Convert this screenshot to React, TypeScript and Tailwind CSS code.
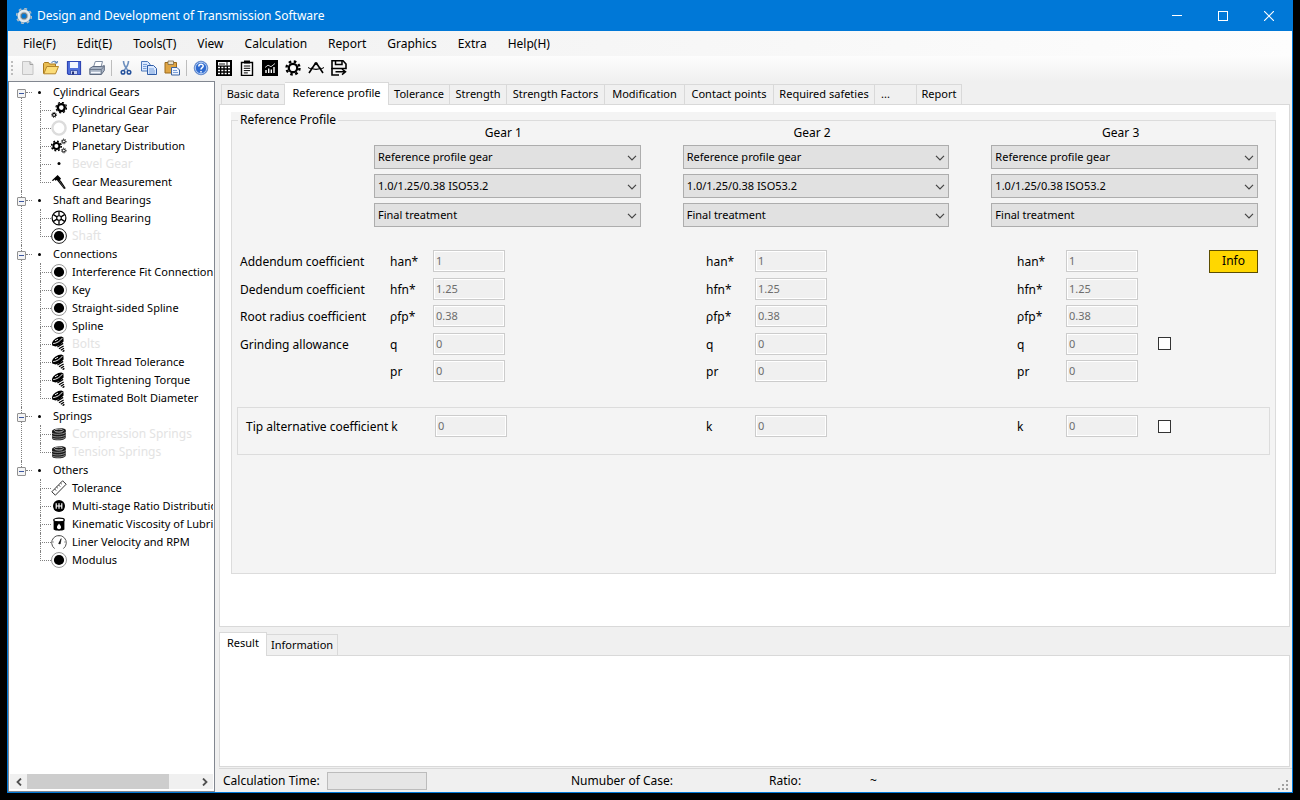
import React, { useState } from 'react';

type IconProps = { className?: string };

const Svg = ({ children, className = 'size-4' }: { children: React.ReactNode; className?: string }) => (
    <svg viewBox="0 0 16 16" className={`${className} shrink-0`} fill="none" aria-hidden="true">
        {children}
    </svg>
);

// teeth are drawn as a dashed ring around the body
const Cog = ({ cx, cy, r, w, tooth, color = '#000' }: { cx: number; cy: number; r: number; w: number; tooth: number; color?: string }) => {
    const outer = r + w / 2 + tooth / 2;
    const step = (2 * Math.PI * outer) / 16;
    return (
        <g stroke={color}>
            <circle cx={cx} cy={cy} r={r} strokeWidth={w} />
            <circle cx={cx} cy={cy} r={outer} strokeWidth={tooth} strokeDasharray={`${step} ${step}`} />
        </g>
    );
};

const AppIcon = () => (
    <Svg>
        <Cog cx={8} cy={8} r={4.6} w={4} tooth={1.6} color="#aebbc4" />
        <circle cx="8" cy="8" r="5.2" stroke="#e4ebef" strokeWidth="2" />
        <circle cx="8" cy="8" r="2.8" stroke="#5f7480" strokeWidth="1" />
    </Svg>
);

const GearPairIcon = () => (
    <Svg>
        <Cog cx={10.3} cy={5.6} r={3.5} w={2.4} tooth={1.2} />
        <Cog cx={3.1} cy={12.9} r={1.5} w={1.1} tooth={0.9} />
    </Svg>
);

const RingIcon = () => (
    <Svg>
        <circle cx="8" cy="8" r="6.6" stroke="#dcdcdc" strokeWidth="2.4" />
    </Svg>
);

const GearDistributionIcon = () => (
    <Svg>
        <Cog cx={5.4} cy={8} r={3} w={2} tooth={1.6} />
        <Cog cx={12.8} cy={3.4} r={1.5} w={1} tooth={0.8} />
        <Cog cx={12.8} cy={12.5} r={1.5} w={1} tooth={0.8} />
    </Svg>
);

const DotIcon = () => (
    <Svg>
        <circle cx="8" cy="7.5" r="1.5" fill="#000" />
    </Svg>
);

const CaliperIcon = () => (
    <Svg>
        <path d="M.8 6.4 6.6 1l3.4 3.4-1 1.6 1.4 1.4 4.4 6.8-1.800.8-5.600-7-1.600-2-1.400.8-1-1.200-1.200 1.400Z" fill="#000" />
        <path d="m8 6.600 5 7" stroke="#fff" strokeWidth="0.300" />
    </Svg>
);

const BearingIcon = () => (
    <Svg>
        <circle cx="8" cy="8" r="6.9" stroke="#000" strokeWidth="1.2" />
        <circle cx="8" cy="8" r="2.3" stroke="#000" strokeWidth="1.1" />
        <path d="M8 5.700V1.500M8 10.300v4.200M10 6.900l3.600-2.300M10 9.100l3.600 2.300M6 6.900 2.400 4.600M6 9.100l-3.600 2.300" stroke="#000" strokeWidth="1.300" />
    </Svg>
);

const ShaftIcon = () => (
    <Svg>
        <circle cx="8" cy="8" r="7.4" stroke="#222" strokeWidth="1" />
        <circle cx="8" cy="8" r="5.1" fill="#000" />
    </Svg>
);

const DiscIcon = () => (
    <Svg>
        <circle cx="8" cy="8" r="7.5" stroke="#8c8c8c" strokeWidth="0.9" />
        <circle cx="8" cy="8" r="5.1" fill="#000" />
    </Svg>
);

const BoltIcon = () => (
    <Svg>
        <path d="M1 7C2 3.600 6.400.8 10.400.6l2 1 .2 4L9 9l-4.400 1.600L1.200 9.400Z" fill="#000" />
        <path d="M2.200 7.600C5.600 7.400 9.400 5 11.400 2" stroke="#fff" strokeWidth="0.900" />
        <path d="m4 4.800 3-1.600" stroke="#fff" strokeWidth="0.900" />
        <path d="m6.400 11 5.800-3.600M8 12.800l4.600-2.800M9.800 14.200l3.200-2M11.600 15.600l1.800-1.200" stroke="#000" strokeWidth="1.300" />
    </Svg>
);

const SpringIcon = () => (
    <Svg>
        <path d="M1 5.200C1 1.800 14.800 1 14.800 4.200v7.600c-1 3-12.400 3.600-13.800.6Z" fill="#1a1a1a" />
        <ellipse cx="7.800" cy="4.600" rx="4.400" ry="1.500" stroke="#c8c8c8" strokeWidth="0.900" />
        <path d="M1 7.200c3 1.800 10.400 1.400 13.800-.8M1 9.800c3 1.800 10.400 1.400 13.800-.8M1.200 12c3 1.800 10.200 1.400 13.400-.8" stroke="#bdbdbd" strokeWidth="0.700" />
    </Svg>
);

const RulerIcon = () => (
    <Svg>
        <path d="M.8 11.800 11.600.8l3.600 3.400L4.400 15.200Z" fill="#fff" stroke="#333" strokeWidth="1" />
        <path d="m3.600 9 1.600 1.600M5.600 7l1.200 1.200M7.600 5l1.600 1.600M9.600 3l1.200 1.200" stroke="#333" strokeWidth="0.900" />
    </Svg>
);

const GearboxIcon = () => (
    <Svg>
        <circle cx="8" cy="8" r="6" fill="#000" />
        <path d="M5.200 5.200v5.600M8 5.200v5.600M10.800 5.200v5.600M5.200 8h5.600" stroke="#fff" strokeWidth="1.200" />
    </Svg>
);

const OilIcon = () => (
    <Svg>
        <path d="M2.600 4.400h10.800v9.200c-2 1.600-8.800 1.600-10.800 0Z" fill="#000" />
        <ellipse cx="8" cy="4" rx="5.300" ry="1.800" fill="#fff" stroke="#000" strokeWidth="1.200" />
        <path d="M8 7.600c1.600 2.200 2 2.800 2 3.600a2 2 0 0 1-4 0c0-.8.400-1.400 2-3.600Z" fill="#fff" />
    </Svg>
);

const GaugeIcon = () => (
    <Svg>
        <path d="M3.600 14.600a7.300 7.300 0 1 1 8.800 0" stroke="#555" strokeWidth="1" />
        <path d="m7.600 9.600 2.600-5-1 5.400Z" fill="#000" stroke="#000" strokeWidth="0.500" />
        <path d="M8 1.400v1.400M1.600 8H3M13 8h1.400" stroke="#777" strokeWidth="0.700" />
    </Svg>
);

const NewIcon = () => (
    <Svg>
        <path d="M2.500 1.500h7.500l3 3v10H2.500Z" fill="#e9e9e9" stroke="#c4c4c4" />
        <path d="M10 1.500v3h3" stroke="#a2a2a2" />
    </Svg>
);

const OpenIcon = () => (
    <Svg>
        <path d="M.5 13.500v-10l1-1h4l1 1.500h6v3" fill="#e9bd52" stroke="#a8791f" />
        <path d="m.8 13.800 3-7.300h11.700l-3 7.300Z" fill="#fbdc78" stroke="#b5862a" />
        <path d="M8.500 2.600C10.500.6 13 .8 14 3.200m0 0-2.400-.4m2.400.4.600-2" stroke="#5a82b4" strokeWidth="1.100" />
    </Svg>
);

const SaveIcon = () => (
    <Svg>
        <path d="M1.500 1.500h13v13h-12l-1-1Z" fill="#5070dc" stroke="#3046b4" strokeWidth="1.200" />
        <path d="M4 2h8v6H4Z" fill="#f3f6ff" />
        <path d="M4.500 10.500h7v4h-7Z" fill="#c9d2f0" stroke="#2f46a4" strokeWidth="0.800" />
        <path d="M6 11.500h2v3H6Z" fill="#24357e" />
    </Svg>
);

const PrintIcon = () => (
    <Svg>
        <path d="m4.500 7 1.800-5.500h7.200L12 7Z" fill="#fff" stroke="#7e8ba0" />
        <path d="m.8 8.500 3-2h9l2.500-1v5l-3 4H.8Z" fill="#a9b4c4" stroke="#5f6b80" />
        <path d="M2 12.500h9.500" stroke="#f5f8ff" strokeWidth="1.400" />
        <path d="M.8 9.500h11.500l3-3.500M12.300 9.500v5" stroke="#5f6b80" strokeWidth="0.800" />
    </Svg>
);

const CutIcon = () => (
    <Svg>
        <path d="M5.500 1c0 3 1.500 6 4.500 9.500M10.500 1c0 3-1.500 6-4.500 9.500" stroke="#6d8fbe" strokeWidth="1.600" />
        <circle cx="5" cy="12.300" r="1.800" stroke="#24519c" strokeWidth="1.500" />
        <circle cx="11" cy="12.300" r="1.800" stroke="#24519c" strokeWidth="1.500" />
    </Svg>
);

const CopyIcon = () => (
    <Svg>
        <path d="M.5 1.500h6l2.500 2.500v7H.5Z" fill="#dbe9ff" stroke="#4d78ba" />
        <path d="M6.500 5.500h6l3 3v6h-9Z" fill="#dbe9ff" stroke="#2f5da8" />
        <path d="M2 4.500h4M2 6.500h3.500M2 8.500h3.500M8 9h5M8 11h6M8 13h6" stroke="#6d97d6" strokeWidth="0.900" />
    </Svg>
);

const PasteIcon = () => (
    <Svg>
        <path d="M1 2.500h11.500V13H1Z" fill="#dfa544" stroke="#9c6a1c" />
        <path d="M4 1h5.500v3.500H4Z" fill="#e9e2cf" stroke="#7c6a48" strokeWidth="0.800" />
        <path d="M7.500 7.500h5.500l2.500 2.500v5h-8Z" fill="#eef4ff" stroke="#3b639f" />
        <path d="M9 10.500h4M9 12.500h5" stroke="#6d97d6" strokeWidth="0.900" />
    </Svg>
);

const HelpIcon = () => (
    <Svg>
        <circle cx="8" cy="8" r="6.800" fill="#2f6bd0" stroke="#6c8fcb" />
        <circle cx="8" cy="8" r="5.700" stroke="#d4e4fb" strokeWidth="0.800" />
        <path d="M5.800 6.400C5.800 3.400 10.400 3.600 10.200 6.200 10 7.600 8 7.800 8 9.600M8 11v1.500" stroke="#fff" strokeWidth="1.500" />
    </Svg>
);

const CalculatorIcon = () => (
    <Svg>
        <path d="M0 0h16v16H0Z" fill="#000" />
        <path d="M2 2h12v3.500H2Z" fill="#fff" />
        <path d="M3 4h6M11 2v3.500" stroke="#000" strokeWidth="0.900" />
        <path d="M2 7.500h12M2 10.500h12M2 13.500h12" stroke="#fff" strokeWidth="1.600" strokeDasharray="2 1.333" />
    </Svg>
);

const ClipboardIcon = () => (
    <Svg>
        <path d="M2.500 2.500h11v13h-11Z" fill="#fff" stroke="#000" strokeWidth="1.400" />
        <path d="M5 .5h6v3H5Z" fill="#000" />
        <path d="M4.800 6h6.400M4.800 8.300h6.400M4.800 10.600h6.400M4.800 12.900h4" stroke="#000" strokeWidth="1" />
    </Svg>
);

const ChartIcon = () => (
    <Svg>
        <path d="M0 0h16v16H0Z" fill="#000" />
        <path d="M4 13v-3M6.700 13V8.500M9.300 13V9.500M12 13V7" stroke="#fff" strokeWidth="1.400" />
        <path d="m3 7.500 3-2.300 3 1.500L13 3.500" stroke="#fff" strokeWidth="0.800" />
    </Svg>
);

const SettingsIcon = () => (
    <Svg>
        <Cog cx={8} cy={8} r={4.2} w={2.2} tooth={2.4} />
        <circle cx="8" cy="8" r="1.400" fill="#fff" />
    </Svg>
);

const CompassIcon = () => (
    <Svg>
        <path d="M7 4 1 13M9 4l6 9" stroke="#000" strokeWidth="1.600" />
        <path d="M3 8c3 1.600 7 1.600 10 0" stroke="#000" strokeWidth="1.200" />
        <circle cx="8" cy="3.600" r="1.700" fill="#000" />
        <path d="M0 7.500 3 9M13 9l3-1.500" stroke="#000" />
    </Svg>
);

const SaveAsIcon = () => (
    <Svg>
        <path d="M1 .8h11L15 4v4.500H1Z" stroke="#000" strokeWidth="1.600" />
        <path d="M4.500 1v3.500H11V1" stroke="#000" strokeWidth="1.500" />
        <path d="M1 8v7h7" stroke="#000" strokeWidth="1.600" />
        <path d="M4.500 11.800h9M11 9l3.500 2.800L11 14.600" stroke="#000" strokeWidth="1.500" />
    </Svg>
);

interface TreeItem {
    label: string;
    icon: React.ComponentType<IconProps>;
    disabled?: boolean;
}

const tree: { label: string; items: TreeItem[] }[] = [
    {
        label: 'Cylindrical Gears',
        items: [
            { label: 'Cylindrical Gear Pair', icon: GearPairIcon },
            { label: 'Planetary Gear', icon: RingIcon },
            { label: 'Planetary Distribution', icon: GearDistributionIcon },
            { label: 'Bevel Gear', icon: DotIcon, disabled: true },
            { label: 'Gear Measurement', icon: CaliperIcon },
        ],
    },
    {
        label: 'Shaft and Bearings',
        items: [
            { label: 'Rolling Bearing', icon: BearingIcon },
            { label: 'Shaft', icon: ShaftIcon, disabled: true },
        ],
    },
    {
        label: 'Connections',
        items: [
            { label: 'Interference Fit Connection', icon: DiscIcon },
            { label: 'Key', icon: DiscIcon },
            { label: 'Straight-sided Spline', icon: DiscIcon },
            { label: 'Spline', icon: DiscIcon },
            { label: 'Bolts', icon: BoltIcon, disabled: true },
            { label: 'Bolt Thread Tolerance', icon: BoltIcon },
            { label: 'Bolt Tightening Torque', icon: BoltIcon },
            { label: 'Estimated Bolt Diameter', icon: BoltIcon },
        ],
    },
    {
        label: 'Springs',
        items: [
            { label: 'Compression Springs', icon: SpringIcon, disabled: true },
            { label: 'Tension Springs', icon: SpringIcon, disabled: true },
        ],
    },
    {
        label: 'Others',
        items: [
            { label: 'Tolerance', icon: RulerIcon },
            { label: 'Multi-stage Ratio Distribution', icon: GearboxIcon },
            { label: 'Kinematic Viscosity of Lubricant', icon: OilIcon },
            { label: 'Liner Velocity and RPM', icon: GaugeIcon },
            { label: 'Modulus', icon: DiscIcon },
        ],
    },
];

const menus = ['File(F)', 'Edit(E)', 'Tools(T)', 'View', 'Calculation', 'Report', 'Graphics', 'Extra', 'Help(H)'];

const toolGroups = [
    [
        { name: 'New', icon: NewIcon },
        { name: 'Open', icon: OpenIcon },
        { name: 'Save', icon: SaveIcon },
        { name: 'Print', icon: PrintIcon },
    ],
    [
        { name: 'Cut', icon: CutIcon },
        { name: 'Copy', icon: CopyIcon },
        { name: 'Paste', icon: PasteIcon },
    ],
    [
        { name: 'Help', icon: HelpIcon },
        { name: 'Calculate', icon: CalculatorIcon },
        { name: 'Report', icon: ClipboardIcon },
        { name: 'Chart', icon: ChartIcon },
        { name: 'Settings', icon: SettingsIcon },
        { name: 'Drawing', icon: CompassIcon },
        { name: 'Save as', icon: SaveAsIcon },
    ],
];

const tabs = [
    { label: 'Basic data', width: 'w-16' },
    { label: 'Reference profile', width: 'w-[104px]' },
    { label: 'Tolerance', width: 'w-[61px]' },
    { label: 'Strength', width: 'w-[57px]' },
    { label: 'Strength Factors', width: 'w-[98px]' },
    { label: 'Modification', width: 'w-[80px]' },
    { label: 'Contact points', width: 'w-[89px]' },
    { label: 'Required safeties', width: 'w-[101px]' },
    { label: '...', width: 'w-[42px] px-[6px] text-left' },
    { label: 'Report', width: 'w-[45px]' },
];

const coefficients = [
    { label: 'Addendum coefficient', symbol: 'han*', value: '1' },
    { label: 'Dedendum coefficient', symbol: 'hfn*', value: '1.25' },
    { label: 'Root radius coefficient', symbol: 'ρfp*', value: '0.38' },
    { label: 'Grinding allowance', symbol: 'q', value: '0' },
    { label: '', symbol: 'pr', value: '0' },
];

const gears = ['Gear 1', 'Gear 2', 'Gear 3'];
const profileOptions = ['Reference profile gear', '1.0/1.25/0.38 ISO53.2', 'Final treatment'];

const TreeView = () => (
    <nav className="flex w-[207px] shrink-0 flex-col border border-[#828790] bg-white text-[11px]">
        <ul className="mr-px flex-1 overflow-hidden whitespace-nowrap pt-px pl-2">
            {tree.map((group, g) => (
                <li key={group.label} className="flex">
                    <div className="flex w-[9px] shrink-0 flex-col">
                        <div className={`ml-1 h-[6px] ${g > 0 ? 'border-l border-dotted border-[#808080]' : ''}`} />
                        <button aria-label={`Collapse ${group.label}`} className="flex size-[9px] items-center justify-center rounded-[1px] border border-[#919191] bg-[#f4f4f4]">
                            <span className="h-px w-[5px] bg-[#3c57a0]" />
                        </button>
                        {g < tree.length - 1 && <div className="ml-1 flex-1 border-l border-dotted border-[#808080]" />}
                    </div>
                    <div>
                        <div className="flex h-[18px] items-center">
                            <span className="w-[6px] border-t border-dotted border-[#808080]" />
                            <span className="ml-[6px] size-[3px] rounded-full bg-black" />
                            <span className="ml-3">{group.label}</span>
                        </div>
                        <ul className="pl-[14px]">
                            {group.items.map((item, i) => (
                                <li key={item.label} className="flex h-[18px] items-center">
                                    <div className="flex w-[11px] shrink-0 flex-col self-stretch">
                                        <div className="h-[10px] border-b border-l border-dotted border-[#808080]" />
                                        {i < group.items.length - 1 && <div className="flex-1 border-l border-dotted border-[#808080]" />}
                                    </div>
                                    <item.icon />
                                    <span className={`ml-[5px] ${item.disabled ? 'text-[12px] text-[#e3e3e3]' : ''}`}>{item.label}</span>
                                </li>
                            ))}
                        </ul>
                    </div>
                </li>
            ))}
        </ul>
        <div className="mx-px mb-[2px] flex h-[15px] items-center bg-[#f0f0f0]">
            <button aria-label="Scroll left" className="flex h-full w-[17px] items-center justify-center">
                <svg viewBox="0 0 6 8" className="h-2 w-[6px]" fill="none"><path d="M5 .5 1.500 4 5 7.500" stroke="#505050" strokeWidth="1.800" /></svg>
            </button>
            <div className="h-full w-[142px] bg-[#cdcdcd]" />
            <button aria-label="Scroll right" className="ml-auto flex h-full w-[17px] items-center justify-center">
                <svg viewBox="0 0 6 8" className="h-2 w-[6px]" fill="none"><path d="M1 .5 4.500 4 1 7.500" stroke="#505050" strokeWidth="1.800" /></svg>
            </button>
        </div>
    </nav>
);

const ValueInput = ({ id, value }: { id: string; value: string }) => (
    <input
        id={id}
        disabled
        defaultValue={value}
        className="h-[22px] w-[72px] border border-[#cccccc] bg-[#f0f0f0] px-[2px] pb-px text-[11px] text-[#6d6d6d] shadow-[inset_0_0_0_1px_#fff]"
    />
);

const CheckBox = ({ label }: { label: string }) => (
    <input type="checkbox" aria-label={label} className="ml-auto size-[13px] appearance-none border border-[#333333] bg-white checked:bg-[#333333]" />
);

const ProfileSelect = ({ gear, option }: { gear: string; option: string }) => (
    <div className="relative">
        <select aria-label={`${gear} ${option}`} className="block h-6 w-full appearance-none border border-[#adadad] bg-[#e1e1e1] px-[3px] text-[11px]">
            <option>{option}</option>
        </select>
        <svg viewBox="0 0 10 6" className="pointer-events-none absolute top-[10px] right-1 h-[6px] w-[10px]" fill="none">
            <path d="M1 .8 5 4.800 9 .8" stroke="#444" strokeWidth="1.200" />
        </svg>
    </div>
);

const ReferenceProfile = () => (
    <div className="flex flex-1 bg-[#f4f4f4]">
        <fieldset className="min-w-0 flex-1 border border-[#dcdcdc]">
            <legend className="ml-[6px] px-[2px] leading-4">Reference Profile</legend>
            <div className="flex gap-[42px] pr-[17px] pl-[142px]">
                {gears.map((gear) => (
                    <div key={gear} className="flex flex-1 flex-col gap-[5px]">
                        <h2 className="-mt-1 h-4 pr-2 text-center leading-[18px]">{gear}</h2>
                        {profileOptions.map((option) => (
                            <ProfileSelect key={option} gear={gear} option={option} />
                        ))}
                    </div>
                ))}
            </div>
            <div className="mt-[23px] flex pr-[17px] pl-2">
                <div className="grid h-[132px] flex-1 grid-cols-[150px_43px_273fr_49px_262fr_49px_72px_33px_87px] content-between items-center">
                    {coefficients.map((row, r) => (
                        <React.Fragment key={row.symbol}>
                            <span className="pt-[2px] leading-5">{row.label}</span>
                            {gears.map((gear, g) => (
                                <React.Fragment key={gear}>
                                    <label htmlFor={`c${r}-${g}`} className="pt-[2px] leading-5">{row.symbol}</label>
                                    <ValueInput id={`c${r}-${g}`} value={row.value} />
                                </React.Fragment>
                            ))}
                            {row.symbol === 'q' ? <CheckBox label="Edit grinding allowance" /> : <span />}
                            {r === 0 ? (
                                <button className="-my-1 ml-auto h-[23px] w-[49px] border border-[#5c4d00] bg-[#ffd700] leading-4">Info</button>
                            ) : (
                                <span />
                            )}
                        </React.Fragment>
                    ))}
                </div>
            </div>
            <div className="mx-[5px] mt-[25px] grid h-12 grid-cols-[189px_271fr_49px_262fr_49px_72px_33px_87px] items-center border border-[#dcdcdc] pr-[11px] pb-[10px] pl-2">
                <label htmlFor="k-0" className="pt-[2px] leading-5">Tip alternative coefficient k</label>
                <ValueInput id="k-0" value="0" />
                <label htmlFor="k-1" className="pt-[2px] leading-5">k</label>
                <ValueInput id="k-1" value="0" />
                <label htmlFor="k-2" className="pt-[2px] leading-5">k</label>
                <ValueInput id="k-2" value="0" />
                <CheckBox label="Edit tip alternative coefficient" />
            </div>
        </fieldset>
    </div>
);

const App = () => {
    const [activeTab, setActiveTab] = useState<string>('Reference profile');
    const [activeResult, setActiveResult] = useState<string>('Result');

    return (
        <div className="flex h-screen bg-black px-[7px] pb-[7px] font-['Noto_Sans','Open_Sans',sans-serif] text-[12px] text-black">
            <div className="flex min-w-0 flex-1 flex-col border border-t-0 border-[#0078d7] bg-[#f0f0f0]">
                <header className="flex h-[31px] shrink-0 items-center bg-[#0078d7] pl-2 text-white">
                    <AppIcon />
                    <h1 className="ml-[5px] flex-1">Design and Development of Transmission Software</h1>
                    <button aria-label="Minimize" className="flex h-full w-[46px] items-center justify-center">
                        <span className="h-px w-[10px] bg-white" />
                    </button>
                    <button aria-label="Maximize" className="flex h-full w-[46px] items-center justify-center">
                        <span className="size-[10px] border border-white" />
                    </button>
                    <button aria-label="Close" className="flex h-full w-[46px] items-center justify-center">
                        <svg viewBox="0 0 10 10" className="size-[10px]"><path d="m0 0 10 10M10 0 0 10" stroke="#fff" strokeWidth="1.100" /></svg>
                    </button>
                </header>

                <nav className="flex h-[25px] shrink-0 items-center gap-[21px] bg-linear-to-r from-[#f0f0f0] to-[#fdfdfd] pl-[15px]">
                    {menus.map((menu) => (
                        <button key={menu}>{menu}</button>
                    ))}
                </nav>

                <div className="flex h-[25px] shrink-0 items-center bg-linear-to-b from-[#fdfdfd] to-[#f0f0f0] pb-px pl-[3px]">
                    <span className="mr-[7px] h-[14px] border-l-2 border-dotted border-[#bdbdbd]" />
                    {toolGroups.map((tools, i) => (
                        <div key={i} className="flex items-center">
                            {i > 0 && <span className="mx-[6px] h-4 w-px bg-[#bdbdbd]" />}
                            <div className="flex gap-[7px]">
                                {tools.map((tool) => (
                                    <button key={tool.name} aria-label={tool.name}>
                                        <tool.icon />
                                    </button>
                                ))}
                            </div>
                        </div>
                    ))}
                </div>

                <div className="flex min-h-0 flex-1">
                    <TreeView />
                    <div className="flex min-w-0 flex-1 flex-col pl-1">
                        <main className="flex min-h-0 flex-1 flex-col pr-[2px]">
                            <div className="flex h-[23px] shrink-0 items-end pl-[2px] text-[11px]">
                                {tabs.map((tab) => (
                                    <button
                                        key={tab.label}
                                        onClick={() => setActiveTab(tab.label)}
                                        className={`${tab.width} shrink-0 border-t border-r border-[#d9d9d9] whitespace-nowrap first:border-l ${
                                            activeTab === tab.label ? 'z-10 -mb-px h-[23px] bg-white pb-[2px]' : 'h-5 bg-[#f0f0f0]'
                                        }`}
                                    >
                                        {tab.label}
                                    </button>
                                ))}
                            </div>
                            <div className="flex flex-1 flex-col border border-[#d9d9d9] bg-white pt-[7px] pr-[13px] pb-[52px] pl-[11px]">
                                <ReferenceProfile />
                            </div>
                        </main>

                        <section className="flex h-[140px] shrink-0 flex-col pt-[5px] pr-[2px]">
                            <div className="flex h-[23px] items-end text-[11px]">
                                {['Result', 'Information'].map((name) => (
                                    <button
                                        key={name}
                                        onClick={() => setActiveResult(name)}
                                        className={`border-t border-r border-[#d9d9d9] first:border-l ${
                                            activeResult === name ? 'z-10 -mb-px h-6 bg-white px-[7px] pb-[2px]' : 'h-[21px] bg-[#f0f0f0] px-1'
                                        }`}
                                    >
                                        {name}
                                    </button>
                                ))}
                            </div>
                            <div className="flex-1 border border-[#d9d9d9] bg-white" />
                        </section>

                        <footer className="mt-px flex h-6 shrink-0 items-center border-t border-[#d9d9d9] pl-1">
                            <div className="flex w-[348px] items-center gap-[6px]">
                                <span className="w-[98px] whitespace-nowrap">Calculation Time:</span>
                                <div className="h-[18px] w-[100px] border border-[#bcbcbc] bg-[#e6e6e6]" />
                            </div>
                            <span className="w-[198px]">Numuber of Case:</span>
                            <span className="w-[101px]">Ratio:</span>
                            <span>~</span>
                            <svg viewBox="0 0 12 12" className="mr-[2px] ml-auto size-3 self-end" fill="#a0a0a0" aria-hidden="true">
                                <path d="M8 0h2v2H8ZM4 4h2v2H4ZM8 4h2v2H8ZM0 8h2v2H0ZM4 8h2v2H4ZM8 8h2v2H8Z" />
                            </svg>
                        </footer>
                    </div>
                </div>
            </div>
        </div>
    );
};

export default App;
